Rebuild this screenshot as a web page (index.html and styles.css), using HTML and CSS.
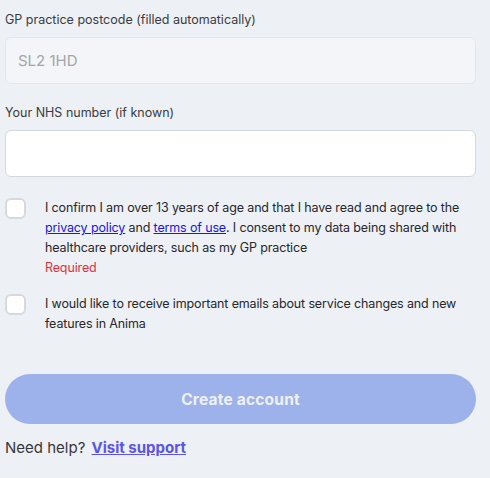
FILE: index.html
```html
<!DOCTYPE html>
<html lang="en">
<head>
<meta charset="utf-8">
<title>Create account</title>
<link rel="stylesheet" href="styles.css">
</head>
<body>
<form class="form">
  <div class="field">
    <label class="label">GP practice postcode (filled automatically)</label>
    <div class="input input-disabled">SL2 1HD</div>
  </div>
  <div class="field">
    <label class="label">Your NHS number (if known)</label>
    <div class="input"></div>
  </div>
  <div class="check check-first">
    <span class="box"></span>
    <div class="check-text">
      <p>I confirm I am over 13 years of age and that I have read and agree to the <a href="#" class="link">privacy policy</a> and <a href="#" class="link">terms of use</a>. I consent to my data being shared with healthcare providers, such as my GP practice</p>
      <p class="error">Required</p>
    </div>
  </div>
  <div class="check">
    <span class="box"></span>
    <div class="check-text">
      <p>I would like to receive important emails about service changes and new features in Anima</p>
    </div>
  </div>
  <button type="button" class="btn">Create account</button>
  <p class="help">Need help? <a href="#" class="support">Visit support</a></p>
</form>
</body>
</html>
```

FILE: styles.css
```css
html, body {
  margin: 0;
  padding: 0;
  background: #edf0f5;
}
body {
  font-family: Inter, "Noto Sans", sans-serif;
  color: #26282c;
  font-size: 13px;
}
.form {
  width: 471px;
  margin-left: 5px;
  padding-top: 11px;
  display: flex;
  flex-direction: column;
}
.field {
  display: flex;
  flex-direction: column;
  margin-bottom: 20px;
}
.label {
  font-size: 12.5px;
  line-height: 18px;
  color: #3a3c40;
  margin-bottom: 8px;
}
.input {
  height: 47px;
  box-sizing: border-box;
  background: #fff;
  border: 1px solid #d3d7de;
  border-radius: 6px;
  padding: 0 12px;
  display: flex;
  align-items: center;
  font-size: 15px;
}
.input-disabled {
  background: #f3f5f9;
  border-color: #e3e6ec;
  color: #a3a5aa;
}
.check {
  display: flex;
  gap: 19px;
}
.check-first {
  margin-top: 1px;
  margin-bottom: 16px;
}
.box {
  flex: none;
  width: 21px;
  height: 21px;
  box-sizing: border-box;
  background: #fff;
  border: 2px solid #d6d9df;
  border-radius: 6px;
}
.check-text {
  font-size: 12.5px;
  line-height: 20px;
  letter-spacing: -0.14px;
}
.check-text p {
  margin: 0;
}
.link {
  color: #1a14e6;
}
.error {
  color: #e0303c;
}
.btn {
  margin-top: 40px;
  height: 50px;
  border: none;
  border-radius: 25px;
  background: #9db1ea;
  color: #eef1fb;
  font-family: inherit;
  font-size: 15.5px;
  letter-spacing: 0.2px;
  font-weight: 700;
}
.help {
  margin: 14px 0 0;
  font-size: 15px;
  line-height: 20px;
  color: #35373b;
}
.support {
  color: #5a55e8;
  font-weight: 700;
  margin-left: 2px;
}
```
